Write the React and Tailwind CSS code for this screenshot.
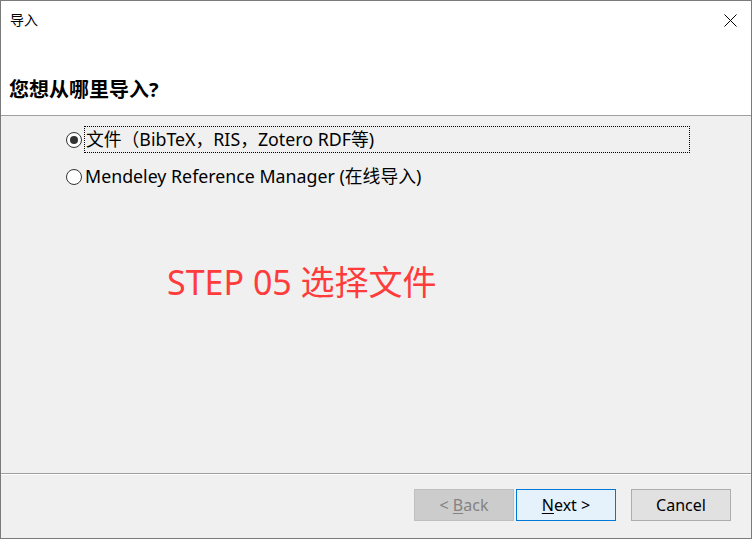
export default function App() {
  const font = { fontFamily: '"Noto Sans", "Noto Sans CJK SC", sans-serif' };

  return (
    <div className="w-[752px] h-[539px] border border-[#7a7a7a] flex flex-col text-black" style={font}>
      {/* Header */}
      <div className="h-[115px] bg-white border-b border-[#a0a0a0] flex flex-col">
        <div className="flex items-start justify-between pl-[9px] pr-[14px] pt-[9px]">
          <span className="text-[14px] leading-[20px]">导入</span>
          <svg width="13" height="13" viewBox="0 0 13 13" className="mt-[4px]">
            <path d="M0.5 0.5 L12.5 12.5 M12.5 0.5 L0.5 12.5" stroke="#000" strokeWidth="1" />
          </svg>
        </div>
        <h1 className="mt-[47px] pl-[8px] text-[20px] font-bold leading-[25px]">您想从哪里导入?</h1>
      </div>

      {/* Body */}
      <div className="flex-1 bg-[#f0f0f0] flex flex-col pt-[10px]">
        <div className="flex items-center pl-[65px] h-[27px]">
          <span className="w-[16px] h-[16px] rounded-full border border-[#333] bg-white flex items-center justify-center">
            <span className="w-[8px] h-[8px] rounded-full bg-[#333]" />
          </span>
          <span className="ml-[2px] w-[606px] h-[27px] border border-dotted border-black flex items-center pl-[1px] text-[17.8px] leading-none">
            文件（BibTeX，RIS，Zotero RDF等)
          </span>
        </div>
        <div className="flex items-center pl-[65px] h-[27px] mt-[10px]">
          <span className="w-[16px] h-[16px] rounded-full border border-[#333] bg-white" />
          <span className="ml-[3px] text-[17.8px] leading-none">Mendeley Reference Manager (在线导入)</span>
        </div>
        <div className="ml-[166px] mt-[70px] text-[34px] leading-[44px] text-[#ff3b3b]">STEP 05 选择文件</div>
      </div>

      {/* Footer */}
      <div className="border-t border-[#a0a0a0] bg-[#f0f0f0]">
        <div className="border-t border-white h-[64px] flex items-start justify-end pt-[14px] pr-[20px]">
          <button className="w-[100px] h-[32px] bg-[#cccccc] border border-[#bfbfbf] text-[#838383] text-[16px]">
            &lt; <span className="underline underline-offset-2">B</span>ack
          </button>
          <button className="ml-[2px] w-[100px] h-[32px] bg-[#e5f1fb] border border-[#0078d7] text-[16px]">
            <span className="underline underline-offset-2">N</span>ext &gt;
          </button>
          <button className="ml-[15px] w-[100px] h-[32px] bg-[#e1e1e1] border border-[#adadad] text-[16px]">
            Cancel
          </button>
        </div>
      </div>
    </div>
  );
}
